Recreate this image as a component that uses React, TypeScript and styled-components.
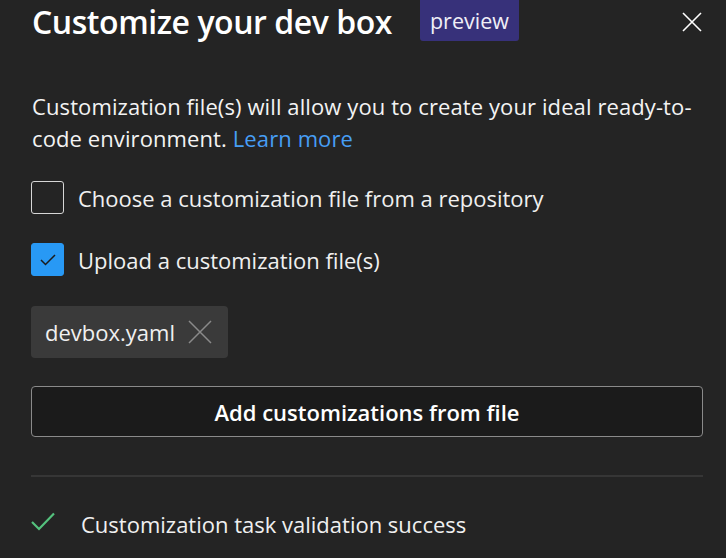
import styled, { createGlobalStyle } from "styled-components";

const GlobalStyle = createGlobalStyle`
  html, body {
    margin: 0;
    padding: 0;
    background: #242424;
  }
  body {
    font-family: "Open Sans", "Noto Sans", sans-serif;
    color: #ffffff;
  }
`;

export default function App() {
  return (
    <>
      <GlobalStyle />
      <Panel>
        <Header>
          <Title>Customize your dev box</Title>
          <Badge>preview</Badge>
          <CloseButton aria-label="Close">
            <svg width="20" height="20" viewBox="0 0 20 20">
              <path d="M1 1 L19 19 M19 1 L1 19" stroke="#ffffff" strokeWidth="1.6" />
            </svg>
          </CloseButton>
        </Header>

        <Intro>
          Customization file(s) will allow you to create your ideal ready-to-code
          environment. <Link href="#">Learn more</Link>
        </Intro>

        <CheckRow>
          <Box checked={false} />
          <Label>Choose a customization file from a repository</Label>
        </CheckRow>
        <CheckRow>
          <Box checked>
            <svg width="16" height="12" viewBox="0 0 16 12">
              <path d="M1 6 L5.5 10.5 L15 1" fill="none" stroke="#1b1b1b" strokeWidth="1.5" />
            </svg>
          </Box>
          <Label>Upload a customization file(s)</Label>
        </CheckRow>

        <Chip>
          <span>devbox.yaml</span>
          <svg width="24" height="24" viewBox="0 0 24 24">
            <path d="M1 1 L23 23 M23 1 L1 23" stroke="#8a8a8a" strokeWidth="1.5" />
          </svg>
        </Chip>

        <WideButton>Add customizations from file</WideButton>

        <Divider />

        <Status>
          <StatusIcon width="24" height="19" viewBox="0 0 24 19">
            <path d="M1 10 L8 17 L23 1.5" fill="none" stroke="#54c17d" strokeWidth="2.2" />
          </StatusIcon>
          <span>Customization task validation success</span>
        </Status>
      </Panel>
    </>
  );
}

// Style
const Panel = styled.div`
  width: 726px;
  height: 558px;
  box-sizing: border-box;
  padding: 0 23px 0 31px;
  overflow: hidden;
  display: flex;
  flex-direction: column;
`;

const Header = styled.header`
  height: 41px;
  display: flex;
  align-items: center;
`;

const Title = styled.h1`
  margin: 0 28px 0 1px;
  font-size: 32px;
  font-weight: 600;
  letter-spacing: -0.45px;
  line-height: 41px;
  white-space: nowrap;
  padding-top: 2px;
`;

const Badge = styled.div`
  align-self: stretch;
  display: flex;
  align-items: center;
  padding: 0 10px;
  background: #37317a;
  border-radius: 0 0 3px 3px;
  font-size: 21.5px;
  color: #f0eff7;
`;

const CloseButton = styled.button`
  margin-left: auto;
  margin-top: 3px;
  margin-right: 1px;
  width: 20px;
  height: 20px;
  padding: 0;
  border: none;
  background: none;
  display: flex;
`;

const Intro = styled.p`
  margin: 49px 0 0 1px;
  font-size: 22px;
  letter-spacing: 0.1px;
  line-height: 32px;
  color: #f3f3f3;
`;

const Link = styled.a`
  color: #479ef5;
  text-decoration: none;
`;

const CheckRow = styled.label`
  display: flex;
  align-items: center;
  gap: 14px;
  height: 33px;
  margin-top: 27px;

  & + & {
    margin-top: 29px;
  }
`;

const Box = styled.span<{ checked: boolean }>`
  width: 33px;
  height: 33px;
  box-sizing: border-box;
  border-radius: 3px;
  display: flex;
  align-items: center;
  justify-content: center;
  border: 1px solid ${(p) => (p.checked ? "#2899f5" : "#d6d6d6")};
  background: ${(p) => (p.checked ? "#2899f5" : "transparent")};
`;

const Label = styled.span`
  font-size: 22px;
  line-height: 30px;
  color: #f0f0f0;
`;

const Chip = styled.div`
  align-self: flex-start;
  margin-top: 30px;
  height: 52px;
  box-sizing: border-box;
  display: flex;
  align-items: center;
  gap: 13px;
  padding: 0 16px 0 14px;
  background: #3a3a3a;
  border-radius: 4px;
  font-size: 22px;
  color: #f0f0f0;
`;

const WideButton = styled.button`
  margin-top: 28px;
  height: 51px;
  border: 1px solid #8a8a8a;
  border-radius: 4px;
  background: #1b1b1b;
  color: #ffffff;
  font-family: inherit;
  font-size: 22px;
  font-weight: 600;
`;

const Divider = styled.hr`
  margin: 38px 0 0;
  border: none;
  height: 2px;
  background: #363636;
`;

const Status = styled.div`
  margin-top: 32px;
  display: flex;
  align-items: center;
  gap: 26px;
  font-size: 22px;
  line-height: 30px;
  color: #f0f0f0;
`;

const StatusIcon = styled.svg`
  flex-shrink: 0;
  margin-top: -6px;
`;
